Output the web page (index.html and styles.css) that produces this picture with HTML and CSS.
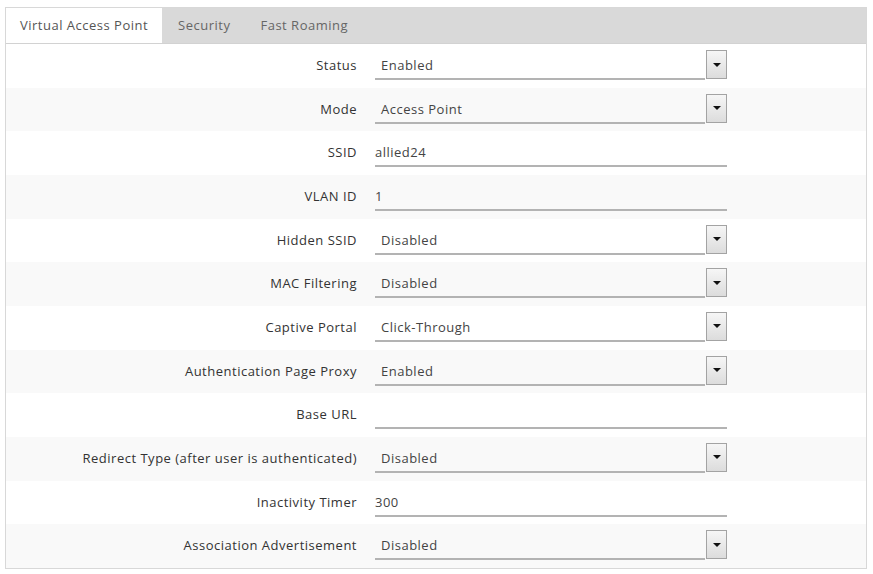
FILE: index.html
```html
<!DOCTYPE html>
<html>
<head>
<meta charset="utf-8">
<link rel="stylesheet" href="styles.css">
</head>
<body>
<div class="panel">
  <div class="tabs">
    <div class="tab active">Virtual Access Point</div>
    <div class="tab">Security</div>
    <div class="tab">Fast Roaming</div>
  </div>
  <div class="rows">
    <div class="row"><div class="label">Status</div><div class="ctl select"><span class="val">Enabled</span><span class="btn"><i class="tri"></i></span></div></div>
    <div class="row"><div class="label">Mode</div><div class="ctl select"><span class="val">Access Point</span><span class="btn"><i class="tri"></i></span></div></div>
    <div class="row"><div class="label">SSID</div><div class="ctl text"><span class="val">allied24</span></div></div>
    <div class="row"><div class="label">VLAN ID</div><div class="ctl text"><span class="val">1</span></div></div>
    <div class="row"><div class="label">Hidden SSID</div><div class="ctl select"><span class="val">Disabled</span><span class="btn"><i class="tri"></i></span></div></div>
    <div class="row"><div class="label">MAC Filtering</div><div class="ctl select"><span class="val">Disabled</span><span class="btn"><i class="tri"></i></span></div></div>
    <div class="row"><div class="label">Captive Portal</div><div class="ctl select"><span class="val">Click-Through</span><span class="btn"><i class="tri"></i></span></div></div>
    <div class="row"><div class="label">Authentication Page Proxy</div><div class="ctl select"><span class="val">Enabled</span><span class="btn"><i class="tri"></i></span></div></div>
    <div class="row"><div class="label">Base URL</div><div class="ctl text"><span class="val"></span></div></div>
    <div class="row"><div class="label">Redirect Type (after user is authenticated)</div><div class="ctl select"><span class="val">Disabled</span><span class="btn"><i class="tri"></i></span></div></div>
    <div class="row"><div class="label">Inactivity Timer</div><div class="ctl text"><span class="val">300</span></div></div>
    <div class="row"><div class="label">Association Advertisement</div><div class="ctl select"><span class="val">Disabled</span><span class="btn"><i class="tri"></i></span></div></div>
  </div>
</div>
</body>
</html>
```
FILE: styles.css
```css
html, body {
  margin: 0;
  padding: 0;
  background: #ffffff;
}
body {
  font-family: "Open Sans", "Noto Sans", sans-serif;
  font-size: 13px;
  letter-spacing: 0.5px;
  color: #333;
  padding: 7px 5px 0 5px;
}
.panel {
  width: 862px;
  border: 1px solid #d8d8d8;
  box-sizing: border-box;
}
.tabs {
  display: flex;
  height: 36px;
  background: #d9d9d9;
  border-bottom: 1px solid #d2d2d2;
  box-sizing: border-box;
}
.tab {
  padding: 0 14px;
  line-height: 35px;
  color: #666;
  font-size: 13px;
  margin-right: 2px;
}
.tab.active {
  background: #fff;
  color: #555;
}
.row {
  display: grid;
  grid-template-columns: 351px 352px;
  column-gap: 18px;
  height: 43.67px;
  background: #fff;
}
.row:nth-child(even) {
  background: #f9f9f9;
}
.label {
  text-align: right;
  padding-top: 12px;
  color: #333;
  white-space: nowrap;
}
.ctl {
  display: flex;
  align-items: flex-end;
  height: 36px;
}
.ctl .val {
  flex: 1;
  height: 34px;
  box-sizing: border-box;
  padding-top: 10px;
  border-bottom: 2px solid #b3b3b3;
  color: #444;
  white-space: nowrap;
}
.select .val {
  padding-left: 6px;
}
.btn {
  width: 19px;
  height: 27px;
  margin-left: 1px;
  margin-bottom: 1px;
  border: 1px solid #a3a3a3;
  background: linear-gradient(#f6f6f6, #dcdcdc);
  display: flex;
  align-items: center;
  justify-content: center;
}
.tri {
  width: 0;
  height: 0;
  border-left: 4px solid transparent;
  border-right: 4px solid transparent;
  border-top: 4px solid #111;
}
```
